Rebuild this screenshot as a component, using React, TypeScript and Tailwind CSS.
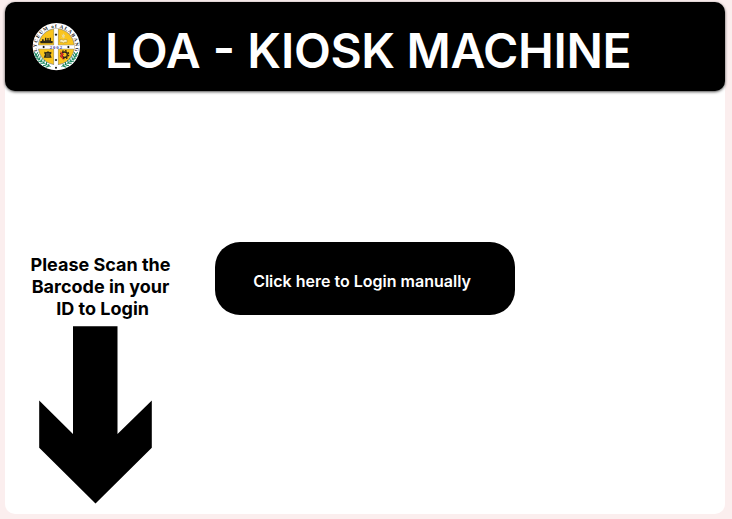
import React from "react";

function Laurel() {
  return (
    <g fill="none" stroke="#16845b" strokeWidth="3.2">
      <path d="M10 92 Q22 116 56 131" strokeWidth="2.5" />
      <path d="M12 96l-5-8M12 96l6-8M16 103l-8-6M16 103l5-9M22 110l-9-4M22 110l3-10M28 116l-10-2M28 116l3-10M35 121l-10 0M35 121l2-10M43 126l-10 2M43 126l1-9M51 129l-10 4M51 129l-1-6" />
    </g>
  );
}

function Seal() {
  return (
    <svg viewBox="0 0 144 144" className="h-12 w-12 shrink-0" aria-label="Lyceum of Alabang">
      <defs>
        <path id="rim" d="M15.4 85 A58 58 0 1 1 128.6 85" />
      </defs>
      <circle cx="73" cy="71" r="71" fill="#fff" />
      <circle cx="73" cy="71" r="54" fill="#fac41c" stroke="#777" strokeWidth="2" />
      <path d="M72 17V127M17 72H127" stroke="#fff" strokeWidth="12" />
      <path d="M65 19V66H19M79 19V66H125M65 125V78H19M79 125V78H125" fill="none" stroke="#8c8c80" strokeWidth="1.5" />
      <g fill="#2c2818">
        <path d="M25 61v-7h5v-5h5v4h4V44h4v8h3v-7h4v7h3v-8h4v10h5v7z" />
        <path d="M37 86l5 2 6-3 6 3 4-2v6l-3 2 4 10H35l4-10-2-2z" />
      </g>
      <path d="M42 93h11M42 99h11" stroke="#c5ad56" strokeWidth="2" />
      <path d="M84 50q6-2 10 2 4-4 11-2v8q-7-2-11 2-4-4-10-2z" fill="#fff1b8" stroke="#9c8849" strokeWidth="1.5" />
      <path d="M94 32v14M89 36l10 7M99 36l-10 7" stroke="#eadb9c" strokeWidth="3" />
      <circle cx="98" cy="95" r="8" fill="none" stroke="#342718" strokeWidth="4" />
      <circle cx="98" cy="95" r="12" fill="none" stroke="#342718" strokeWidth="4" strokeDasharray="5 4.4" />
      <path d="M84 84l13 11-6 2 4 16-12-16 6-2z" fill="#e32a2a" />
      <text x="73" y="77" textAnchor="middle" fontSize="14" fontWeight="700" letterSpacing="3" fill="#38349b" className="font-['Liberation_Serif',serif]">2002</text>
      <g fill="#111">
        <path d="M72 31l4 4-4 4-4-4zM35 68l4 4-4 4-4-4zM109 68l4 4-4 4-4-4zM72 107l4 4-4 4-4-4z" />
        <circle cx="72" cy="134" r="3" />
      </g>
      <Laurel />
      <g transform="translate(144 0) scale(-1 1)">
        <Laurel />
      </g>
      <text fontSize="15" fontWeight="700" fill="#111" className="font-['Liberation_Serif',serif]">
        <textPath href="#rim" startOffset="0" textLength="207">LYCEUM of ALABANG</textPath>
      </text>
    </svg>
  );
}

export default function App() {
  return (
    <div className="h-[519px] w-[732px] overflow-hidden bg-[#fbeeee] pt-0.5 pl-[5px] font-['Inter',sans-serif]">
      <main className="h-[512px] w-[720px] rounded-[10px] bg-white">
        <header className="flex h-[89px] items-center rounded-[10px] bg-black pl-[27px] shadow-[0_1px_3px_rgba(0,0,0,0.7)]">
          <Seal />
          <h1 className="mt-2 ml-[25px] whitespace-nowrap text-[48px] leading-[58px] font-semibold text-white">
            LOA - K<span className="tracking-[-0.35px]">IOSK MACHINE</span>
          </h1>
        </header>
        <div className="flex pt-[151px]">
          <section className="mt-3 ml-5 flex w-[150px] flex-col items-start">
            <p className="w-full whitespace-pre pl-px text-center text-[18px] leading-[22px] font-bold text-black">
              {"Please Scan the\nBarcode in your\n ID to Login"}
            </p>
            <svg viewBox="0 0 114 180" className="mt-1 ml-[13px] h-[180px] w-[114px]" aria-hidden="true">
              <path d="M35 2.2H79.5V110L113.8 76.5V123.8L57.5 179.5L1.2 123.8V76.5L35 110Z" fill="#000" />
            </svg>
          </section>
          <button className="ml-10 h-[73px] w-[300px] rounded-[25px] bg-black pt-[5px] pr-[6px] text-base font-semibold text-white">
            Click here to Login manually
          </button>
        </div>
      </main>
    </div>
  );
}
